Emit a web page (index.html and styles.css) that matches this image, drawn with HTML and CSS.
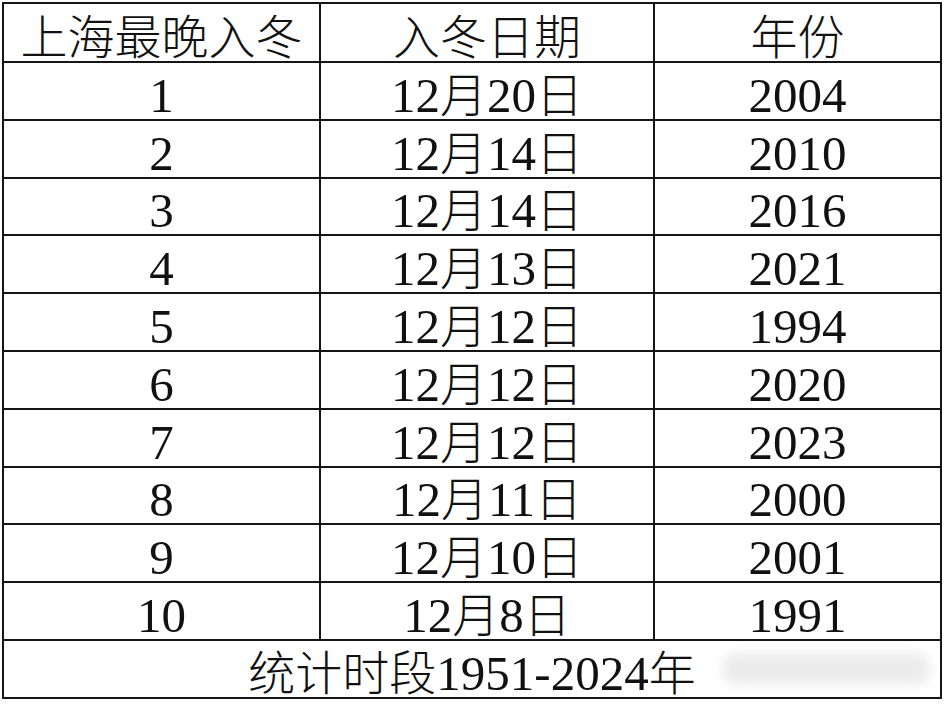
FILE: index.html
```html
<!DOCTYPE html>
<html lang="zh-CN">
<head>
<meta charset="utf-8">
<title>上海最晚入冬</title>
<link rel="stylesheet" href="styles.css">
</head>
<body>
<div class="sheet">
  <div class="cell">上海最晚入冬</div>
  <div class="cell">入冬日期</div>
  <div class="cell">年份</div>

  <div class="cell"><span class="n">1</span></div>
  <div class="cell"><span class="n">12</span>月<span class="n">20</span>日</div>
  <div class="cell"><span class="n">2004</span></div>

  <div class="cell"><span class="n">2</span></div>
  <div class="cell"><span class="n">12</span>月<span class="n">14</span>日</div>
  <div class="cell"><span class="n">2010</span></div>

  <div class="cell"><span class="n">3</span></div>
  <div class="cell"><span class="n">12</span>月<span class="n">14</span>日</div>
  <div class="cell"><span class="n">2016</span></div>

  <div class="cell"><span class="n">4</span></div>
  <div class="cell"><span class="n">12</span>月<span class="n">13</span>日</div>
  <div class="cell"><span class="n">2021</span></div>

  <div class="cell"><span class="n">5</span></div>
  <div class="cell"><span class="n">12</span>月<span class="n">12</span>日</div>
  <div class="cell"><span class="n">1994</span></div>

  <div class="cell"><span class="n">6</span></div>
  <div class="cell"><span class="n">12</span>月<span class="n">12</span>日</div>
  <div class="cell"><span class="n">2020</span></div>

  <div class="cell"><span class="n">7</span></div>
  <div class="cell"><span class="n">12</span>月<span class="n">12</span>日</div>
  <div class="cell"><span class="n">2023</span></div>

  <div class="cell"><span class="n">8</span></div>
  <div class="cell"><span class="n">12</span>月<span class="n">11</span>日</div>
  <div class="cell"><span class="n">2000</span></div>

  <div class="cell"><span class="n">9</span></div>
  <div class="cell"><span class="n">12</span>月<span class="n">10</span>日</div>
  <div class="cell"><span class="n">2001</span></div>

  <div class="cell"><span class="n">10</span></div>
  <div class="cell"><span class="n">12</span>月<span class="n">8</span>日</div>
  <div class="cell"><span class="n">1991</span></div>

  <div class="cell footer">统计时段<span class="n">1951-2024</span>年<span class="mark"></span></div>
</div>
</body>
</html>
```

FILE: styles.css
```css
html, body {
  margin: 0;
  padding: 0;
  background: #ffffff;
}

body {
  padding: 2px 0 0 2px;
}

.sheet {
  width: 940px;
  box-sizing: border-box;
  display: grid;
  grid-template-columns: 317px 334px 287px;
  grid-template-rows: 59px repeat(11, 57.8px);
  border-left: 2px solid #151515;
  border-top: 2px solid #151515;
  font-family: "Noto Sans CJK SC", sans-serif;
  font-weight: 300;
  font-size: 47px;
  color: #111111;
}

.cell {
  box-sizing: border-box;
  border-right: 2px solid #151515;
  border-bottom: 2px solid #151515;
  display: flex;
  align-items: center;
  justify-content: center;
  line-height: 44px;
  white-space: nowrap;
  padding-top: 2px;
}

.n {
  font-family: "Liberation Serif", serif;
  font-weight: 400;
  font-size: 49px;
  line-height: 40px;
  position: relative;
  top: 4px;
}

.footer {
  grid-column: 1 / 4;
  position: relative;
}

.mark {
  position: absolute;
  left: 718px;
  top: 12px;
  width: 208px;
  height: 32px;
  border-radius: 14px;
  background: #ececec;
  filter: blur(6px);
}
```
